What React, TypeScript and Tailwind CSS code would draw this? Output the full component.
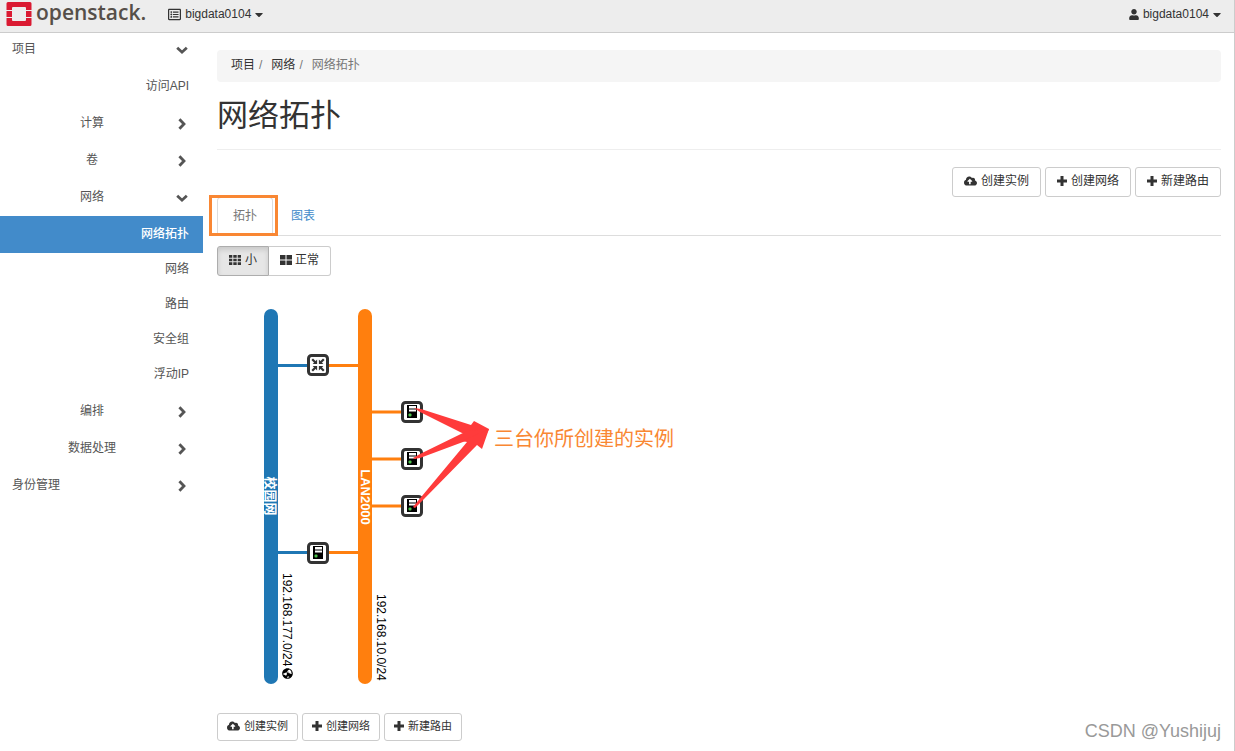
import React, { useState } from "react";
import {
  FaCaretDown,
  FaCloudUploadAlt,
  FaGlobeAmericas,
  FaRegListAlt,
  FaUser,
} from "react-icons/fa";

const BLUE = "#1f77b4";
const ORANGE = "#ff7f0e";

type MenuItem = {
  label: string;
  level: "root" | "group" | "leaf" | "sub";
  open?: boolean;
  active?: boolean;
};

const menu: MenuItem[] = [
  { label: "项目", level: "root", open: true },
  { label: "访问API", level: "leaf" },
  { label: "计算", level: "group" },
  { label: "卷", level: "group" },
  { label: "网络", level: "group", open: true },
  { label: "网络拓扑", level: "leaf", active: true },
  { label: "网络", level: "sub" },
  { label: "路由", level: "sub" },
  { label: "安全组", level: "sub" },
  { label: "浮动IP", level: "sub" },
  { label: "编排", level: "group" },
  { label: "数据处理", level: "group" },
  { label: "身份管理", level: "root" },
];

function Chevron({ open }: { open?: boolean }) {
  return (
    <svg width="12" height="12" viewBox="0 0 12 12" aria-hidden="true">
      <path
        d={open ? "M1.2 3.8 L6 8.2 L10.8 3.8" : "M3.4 1.2 L8 6 L3.4 10.8"}
        fill="none"
        stroke="#555"
        strokeWidth="2.8"
      />
    </svg>
  );
}

function PlusIcon() {
  return (
    <svg width="10" height="10" viewBox="0 0 10 10" aria-hidden="true">
      <path d="M3.5 0h3v3.500h3.500v3h-3.500V10h-3V6.500H0v-3h3.500z" fill="#333" />
    </svg>
  );
}

function GridIcon({ large }: { large?: boolean }) {
  return (
    <svg width="12" height="10" viewBox="0 0 12 10" fill="#333" aria-hidden="true">
      {large ? (
        <path d="M0 0h5.500v4.500H0zM6.500 0H12v4.500H6.500zM0 5.500h5.500V10H0zM6.500 5.500H12V10H6.500z" />
      ) : (
        <path d="M0 0h3.300v2.700H0zM4.300 0h3.400v2.700H4.300zM8.700 0H12v2.700H8.700zM0 3.700h3.300v2.600H0zM4.300 3.700h3.400v2.600H4.300zM8.700 3.700H12v2.600H8.700zM0 7.300h3.300V10H0zM4.300 7.300h3.400V10H4.300zM8.700 7.300H12V10H8.700z" />
      )}
    </svg>
  );
}

function Logo() {
  return (
    <a href="#" className="flex items-center gap-1 text-[#564f49]">
      <svg width="26" height="26" viewBox="0 0 26 26" aria-hidden="true">
        <path
          d="M2 1h22a1.500 1.500 0 0 1 1.500 1.500V9h-5.500V7a1 1 0 0 0-1-1H7a1 1 0 0 0-1 1v2H.5V2.500A1.500 1.500 0 0 1 2 1z"
          fill="#da1a32"
        />
        <path
          d="M2 25h22a1.500 1.500 0 0 0 1.500-1.500V17h-5.500v2a1 1 0 0 1-1 1H7a1 1 0 0 1-1-1v-2H.5v6.500A1.500 1.500 0 0 0 2 25z"
          fill="#da1a32"
        />
        <path d="M.5 10H6v6H.5zM20 10h5.500v6H20z" fill="#da1a32" />
      </svg>
      <span className="pb-1 font-['Open_Sans',sans-serif] text-[21px] leading-6 font-semibold">
        openstack.
      </span>
    </a>
  );
}

function ActionButtons({ small }: { small?: boolean }) {
  const cls = `flex items-center gap-1 rounded-[3px] border border-[#ccc] bg-white pb-0.5 ${
    small ? "h-7 px-[9px] text-[11px]" : "h-[30px] px-[11px] text-xs"
  }`;
  return (
    <div className="flex gap-1">
      <button className={cls}>
        <FaCloudUploadAlt className="h-3 w-[13px]" />
        创建实例
      </button>
      <button className={cls}>
        <PlusIcon />
        创建网络
      </button>
      <button className={cls}>
        <PlusIcon />
        新建路由
      </button>
    </div>
  );
}

function DeviceBox({ x, y, router }: { x: number; y: number; router?: boolean }) {
  return (
    <g transform={`translate(${x} ${y})`}>
      <rect x="-9.500" y="-9.500" width="19" height="19" rx="3" fill="#fff" stroke="#333" strokeWidth="3" />
      {router ? (
        <g fill="#333" stroke="#333" strokeWidth="2.2">
          {[0, 90, 180, 270].map((angle) => (
            <g key={angle} transform={`rotate(${angle})`}>
              <path d="M-5.800 -5.800L-2.500 -2.500" />
              <path d="M-0.900 -5.400V-0.900H-5.400z" stroke="none" />
            </g>
          ))}
        </g>
      ) : (
        <>
          <rect x="-5" y="-7" width="10" height="13" />
          <rect x="-3" y="-6" width="7" height="2.500" fill="#fff" />
          <rect x="-3" y="-2.500" width="7" height="2" fill="#fff" />
          <rect x="-3.500" y="1.500" width="3" height="3" rx="1" fill="#4cc34c" />
        </>
      )}
    </g>
  );
}

function Topology() {
  return (
    <svg
      width="520"
      height="400"
      viewBox="217 296 520 400"
      className="block max-w-full"
      fontFamily="'Liberation Sans', 'Noto Sans CJK SC', sans-serif"
    >
      <rect x="264" y="309" width="14" height="375" rx="7" fill={BLUE} />
      <rect x="358" y="309" width="14" height="375" rx="7" fill={ORANGE} />

      <g strokeWidth="3">
        <path d="M278 365.500H308M278 552.500H308" stroke={BLUE} />
        <path
          d="M328 365.500H358M328 552.500H358M372 412H402M372 459H402M372 506H402"
          stroke={ORANGE}
        />
      </g>

      <DeviceBox x={318} y={365} router />
      <DeviceBox x={318} y={553} />
      <DeviceBox x={412} y={412} />
      <DeviceBox x={412} y={459} />
      <DeviceBox x={412} y={506} />

      <g fill="#fff" fontSize="13" fontWeight="bold" textAnchor="middle">
        <text transform="translate(266 496) rotate(90)">校园网</text>
        <text transform="translate(361 497) rotate(90)">LAN2000</text>
      </g>
      <g fontSize="12" fill="#000">
        <text transform="translate(283 573) rotate(90)">192.168.177.0/24</text>
        <text transform="translate(377 594) rotate(90)">192.168.10.0/24</text>
      </g>
      <g transform="translate(293 668) rotate(90)">
        <FaGlobeAmericas size={11} color="#000" />
      </g>

      {/* arrows from the three instances to the note */}
      <g fill="#ff3b3b">
        <path d="M414 408L421 409L471 425L474 421L489 429L484 438L462 433L420 412z" />
        <path d="M413 458L420 454L467 431L489 429L482 442L471 439L420 458L414 459z" />
        <path d="M413 507L422 496L467 442L462 441L489 429L482 449L477 445L424 499L415 508z" />
      </g>
      <text x="494" y="446" fontSize="20" fill="#f98733">
        三台你所创建的实例
      </text>
    </svg>
  );
}

const levelClass = {
  root: "h-[37px] pb-px pl-3 pr-[15px]",
  group: "h-[37px] pb-px pl-2 pr-[15px]",
  leaf: "h-[37px] justify-end pb-px pr-[14px]",
  sub: "h-[35px] justify-end pb-[3px] pr-[14px]",
};

export default function App() {
  const [size, setSize] = useState("small");

  return (
    <div className="relative flex min-h-screen flex-col border-r border-[#ccc] bg-white font-['Liberation_Sans','Noto_Sans_CJK_SC',sans-serif] text-xs text-[#333]">
      <header className="flex h-[33px] items-center justify-between border-b border-[#ccc] bg-[#ededed] pb-1 pl-[6px] pr-[13px]">
        <div className="flex items-center gap-[22px]">
          <Logo />
          <button className="flex items-center gap-1">
            <FaRegListAlt className="h-[13px] w-[13px]" />
            bigdata0104
            <FaCaretDown className="h-[13px] w-2" />
          </button>
        </div>
        <button className="flex items-center gap-1">
          <FaUser className="h-[11px] w-[10px]" />
          bigdata0104
          <FaCaretDown className="h-[13px] w-2" />
        </button>
      </header>

      <div className="flex flex-1">
        <nav className="-mt-0.5 w-[203px] shrink-0">
          {menu.map((item, i) => (
            <a
              key={i}
              href="#"
              className={`flex items-center ${levelClass[item.level]} ${
                item.active ? "bg-[#428bca] font-medium text-white" : "text-[#555]"
              }`}
            >
              <span className={item.level === "group" ? "flex-1 text-center" : ""}>
                {item.label}
              </span>
              {(item.level === "root" || item.level === "group") && (
                <span className="ml-auto pt-0.5">
                  <Chevron open={item.open} />
                </span>
              )}
            </a>
          ))}
        </nav>

        <main className="min-w-0 flex-1 pt-[17px] pb-[10px] pl-[14px] pr-[13px]">
          <ol className="flex h-8 items-center gap-1 rounded bg-[#f5f5f5] px-[14px] pb-0.5">
            <li>
              <a href="#">项目</a>
            </li>
            <li className="pr-[5px] text-[#777]">/</li>
            <li>
              <a href="#">网络</a>
            </li>
            <li className="pr-[5px] text-[#777]">/</li>
            <li className="text-[#777]">网络拓扑</li>
          </ol>

          <h1 className="border-b border-[#eee] pt-4 pb-[15px] text-[31px] leading-9">网络拓扑</h1>

          <div className="flex justify-end pt-[17px]">
            <ActionButtons />
          </div>

          <div className="relative flex h-[39px] border-b border-[#ddd]">
            <button className="h-[38px] w-14 self-end rounded-t border border-b-0 border-[#ddd] pb-0.5 text-[#777]">
              拓扑
            </button>
            <button className="h-[38px] w-[60px] self-end pb-px text-[#428bca]">图表</button>
            <span className="absolute -top-0.5 -left-2 h-[41px] w-[69px] border-[3px] border-[#f98733]" />
          </div>

          <div className="flex pt-[10px]">
            <button
              onClick={() => setSize("small")}
              className={`flex h-[30px] items-center gap-1 rounded-l-[3px] border px-[11px] pb-0.5 ${
                size === "small"
                  ? "border-[#adadad] bg-[#e6e6e6] shadow-[inset_0_3px_5px_rgba(0,0,0,0.125)]"
                  : "border-[#ccc]"
              }`}
            >
              <GridIcon />
              小
            </button>
            <button
              onClick={() => setSize("normal")}
              className={`flex h-[30px] items-center gap-[3px] rounded-r-[3px] border border-l-0 px-[11px] pb-0.5 ${
                size === "normal"
                  ? "border-[#adadad] bg-[#e6e6e6] shadow-[inset_0_3px_5px_rgba(0,0,0,0.125)]"
                  : "border-[#ccc]"
              }`}
            >
              <GridIcon large />
              正常
            </button>
          </div>

          <div className="pt-5 pb-[17px]">
            <Topology />
          </div>

          <ActionButtons small />
        </main>
      </div>

      <span className="absolute right-[13px] bottom-2 text-[18px] leading-6 text-[#999]">
        CSDN @Yushijuj
      </span>
    </div>
  );
}
